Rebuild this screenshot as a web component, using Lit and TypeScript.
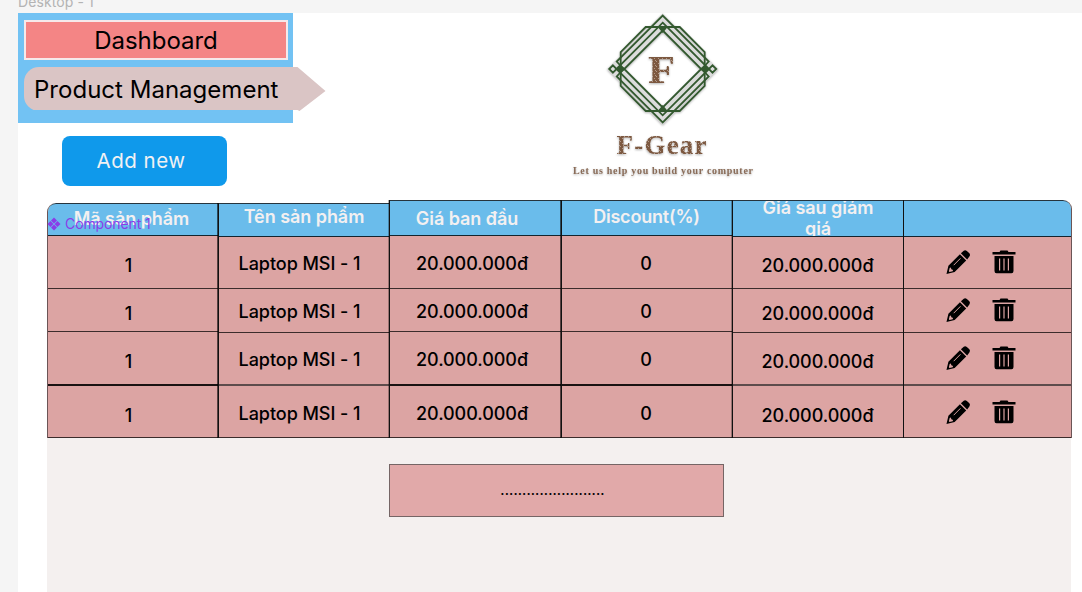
import { LitElement, html, css, svg } from "lit";
import { customElement } from "lit/decorators.js";

interface Column {
  cls: string;
  title: string;
  value: string;
}

const COLUMNS: Column[] = [
  { cls: "c1", title: "Mã sản phẩm", value: "1" },
  { cls: "c2", title: "Tên sản phẩm", value: "Laptop MSI - 1" },
  { cls: "c3", title: "Giá ban đầu", value: "20.000.000đ" },
  { cls: "c4", title: "Discount(%)", value: "0" },
  { cls: "c5", title: "Giá sau giảm giá", value: "20.000.000đ" },
  { cls: "c6", title: "", value: "" },
];
const ROWS = ["r1", "r2", "r3", "r4"];

@customElement("fg-logo")
export class FgLogo extends LitElement {
  static styles = css`
    :host { display: block; width: 210px; height: 177px; }
    svg { display: block; overflow: visible; }
    .shade { filter: drop-shadow(0 1.5px 1.2px rgba(0, 0, 0, 0.3)); }
    .line { fill: none; stroke: #33592f; stroke-width: 1.8; }
    .band { fill: none; stroke: #dcdcdc; stroke-width: 13; }
    .solid { fill: #33592f; }
    .word { font-family: "Liberation Serif", serif; font-weight: 700; fill: url(#wood); }
    .tag { fill: #8a6c58; }
  `;
  render() {
    const diamond = (r: number) =>
      svg`<path class="line" d="M0 ${-r}L${r} 0L0 ${r}L${-r} 0Z"/>`;
    return html`<svg width="210" height="177" viewBox="560 13 210 177">
      <defs>
        <pattern id="wood" width="4" height="5" patternUnits="userSpaceOnUse">
          <rect width="4" height="5" fill="#7c5840" />
          <path d="M0 1h1v1h-1zM2 3h1v1h-1zM3 0h1v1h-1z" fill="#b29a8a" />
        </pattern>
      </defs>
      <g class="shade">
        <g transform="translate(662.7 69)">
          <path class="band" d="M0 -46.500L46.500 0L0 46.500L-46.500 0Z" />
          ${diamond(38.5)}${diamond(46.3)}
          <path class="line" d="M-17 -42H17L42 -17V17L17 42H-17L-42 17V-17Z" />
          <path class="line" d="M-39 0L-46 -7.500L0 -53.500L46 -7.500L39 0L46 7.500L0 53.500L-46 7.500Z" />
          <path class="solid" d="M0 -43l5 1l-5 6l-5-6zM0 43l5-1l-5-6l-5 6zM-46 0l4-4l5 4l-5 4zM46 0l-4-4l-5 4l5 4z" />
          <path class="line" stroke-width="1.5" d="M-53.500 0l3.700-3.700l3.700 3.700l-3.700 3.700zM53.500 0l-3.700-3.700l-3.700 3.700l3.700 3.700z" />
        </g>
        <text class="word" x="648" y="83" font-size="41" textLength="27" lengthAdjust="spacingAndGlyphs">F</text>
        <text class="word" x="616.500" y="153.500" font-size="27" textLength="90">F-Gear</text>
        <text class="word tag" x="573" y="174" font-size="10" textLength="180">Let us help you build your computer</text>
      </g>
    </svg>`;
  }
}

@customElement("app-root")
export class AppRoot extends LitElement {
  static styles = css`
    :host {
      display: block; position: relative; box-sizing: border-box;
      width: 1082px; height: 592px; overflow: hidden;
      padding: 13px 0 0 18px; background: #f5f5f5;
      font-family: Inter, sans-serif; color: #000;
    }
    * { box-sizing: border-box; }
    .frame-name {
      position: absolute; left: 18px; top: -7px; font-size: 14px; line-height: 18px;
      color: #b3b3b3; letter-spacing: 0.1px; white-space: nowrap;
    }
    .frame { height: 579px; background: #fff; display: flex; flex-direction: column; }
    .top { display: flex; height: 187px; flex: none; }
    .left { width: 542px; }
    .nav { width: 275px; height: 109.500px; background: #72c2f3; padding: 7px 5px 0 6px; }
    .dash {
      width: 264px; height: 40px; border: 2px solid #f6e9ea; background: #f48585;
      font-size: 24px; line-height: 37px; text-align: center; letter-spacing: -0.02px;
    }
    .prod {
      width: 302.500px; height: 44px; margin: 7px 0 0 -0.500px; padding-left: 10.500px;
      background: #dac5c5; border-radius: 15px 0 0 15px;
      clip-path: polygon(0 0, 274px 0, 302px 24px, 276px 44px, 274px 43px, 0 43px);
      font-size: 24px; line-height: 45px; white-space: nowrap; letter-spacing: 0.02px;
    }
    .add {
      display: block; border: 0; width: 165px; height: 50px; margin: 13.500px 0 0 43.500px; padding: 0 6px 0 0;
      border-radius: 8px; background: #0f99eb; color: #f1f1f3;
      font: 400 20.5px/50px Inter, sans-serif; letter-spacing: 0.5px;
    }
    .table { display: flex; height: 238px; width: 1025px; margin-left: 29px; flex: none; align-items: flex-end; }
    .col { display: flex; flex-direction: column; border-left: 1px solid #111; text-align: center; font-size: 18px; line-height: 22px; font-weight: 500; letter-spacing: -0.05px; }
    .cell { border-bottom: 1px solid #3c2c2c; background: #dca4a3; white-space: nowrap; }
    .head {
      border-top: 1px solid #26343d; border-bottom: 1px solid #14242e; background: #6abceb;
      color: #f3f0f1; font-weight: 600; overflow: hidden;
    }
    .c1 { width: 171px; border-left-color: #6b5556; border-top-left-radius: 9px; overflow: hidden; }
    .c2 { width: 171px; box-shadow: -1px 0 rgba(0, 0, 0, 0.6); }
    .c3 { width: 172px; box-shadow: -1px 0 rgba(0, 0, 0, 0.3); }
    .c4 { width: 171px; box-shadow: -1px 0 rgba(0, 0, 0, 0.6); }
    .c5 { width: 171px; box-shadow: -1px 0 rgba(0, 0, 0, 0.3); }
    .c6 { width: 169px; border-right: 1px solid #6b5556; border-top-right-radius: 9px; overflow: hidden; }
    .c1 .head { height: 33px; padding: 4px 3px 0 0; border-top-left-radius: 8px; }
    .c2 .head { height: 34px; padding-top: 2px; }
    .c3 .head { height: 36px; padding: 7px 17px 0 0; }
    .c4 .head { height: 36px; padding: 5px 1px 0 0; letter-spacing: -0.2px; }
    .c5 .head { height: 37px; padding: 0 20px; line-height: 21px; white-space: normal; }
    .c5 .head span { display: block; margin-top: -4px; }
    .c6 .head { height: 37px; border-top-right-radius: 8px; }
    .r1 { height: 52px; padding-top: 16px; }
    .r2 { height: 44px; padding-top: 12px; }
    .r3 { height: 53px; padding-top: 16px; border-bottom: 2px solid #5d4c4c; }
    .r4 { height: 52px; padding-top: 17px; }
    .c1 .r1, .c3 .r1, .c4 .r1 { height: 53px; padding-top: 17px; }
    .c1 .r2, .c3 .r2, .c4 .r2 { height: 43px; }
    .c1 .r3, .c3 .r3, .c4 .r3 { height: 54px; padding-top: 17px; border-bottom-color: #1a1212; }
    .c1 .cell:not(.head) span, .c5 .cell:not(.head) span { display: block; margin-top: 2px; }
    .c1 .cell:not(.head) { padding-right: 9px; }
    .c2 .cell:not(.head) { padding-right: 9px; }
    .c3 .cell:not(.head) { padding-right: 7px; }
    .c4 .cell:not(.head) { padding-right: 2px; }
    .c5 .cell:not(.head) { padding-right: 1px; }
    .icons { display: flex; justify-content: center; gap: 21px; padding-right: 14px; }
    .icons svg { display: block; margin-top: -4px; }
    .rest { flex: 1; width: 1024px; margin-left: 29px; background: #f4f0ef; padding: 26px 0 0 341.500px; }
    .more {
      width: 335px; height: 53px; border: 1px solid #756565; background: #e1a9a9;
      text-align: center; font-size: 14px; line-height: 50px; padding-right: 7px; letter-spacing: 0.1px; font-weight: 500;
    }
    .component {
      position: absolute; left: 47px; top: 215px; display: flex; align-items: center; gap: 4px;
      color: #8a3de8; font-size: 14px; line-height: 18px; letter-spacing: -0.1px;
    }
  `;

  private icons() {
    return html`
      <svg width="25" height="26" viewBox="0 0 26 26">
        <path d="M0.500 25.500L2.500 17L14.500 5L21 11.500L9 23.300Z M15.500 4L18.500 1.200Q20 0 21.700 1.500L24.300 4Q25.600 5.700 24.300 7.300L22 10.500Z" />
        <path d="M8 16.300L15 9.200" stroke="#dca4a3" stroke-width="1" />
        <path d="M3.800 19.200L5 18.800L5.600 20.600L7.300 21.300L7 22.600L3.600 23.500L3 22.700Z" fill="#dca4a3" />
      </svg>
      <svg width="24" height="26" viewBox="0 0 24 26">
        <path d="M0.500 3H7.500L8.500 1.500H15.500L16.500 3H23.500V5.500H0.500Z M2.500 7H21.500V22Q21.500 24.200 19.500 24.200H4.500Q2.500 24.200 2.500 22Z" />
        <path d="M7.600 9.500V21.500M12 9.500V21.500M16.400 9.500V21.500" stroke="#dca4a3" stroke-width="1.200" />
      </svg>`;
  }

  render() {
    return html`
      <div class="frame-name">Desktop - 1</div>
      <main class="frame">
        <section class="top">
          <div class="left">
            <nav class="nav">
              <div class="dash">Dashboard</div>
              <div class="prod">Product Management</div>
            </nav>
            <button class="add">Add new</button>
          </div>
          <fg-logo></fg-logo>
        </section>
        <section class="table">
          ${COLUMNS.map(
            (c) => html`<div class="col ${c.cls}">
              <div class="cell head"><span>${c.title}</span></div>
              ${ROWS.map((r) =>
                c.cls === "c6"
                  ? html`<div class="cell icons ${r}">${this.icons()}</div>`
                  : html`<div class="cell ${r}"><span>${c.value}</span></div>`
              )}
            </div>`
          )}
        </section>
        <section class="rest"><div class="more">........................</div></section>
      </main>
      <div class="component">
        <svg width="14" height="14" viewBox="0 0 14 14" fill="#8a3de8">
          <path d="M7 0.500l3 3l-3 3l-3-3zM7 7.500l3 3l-3 3l-3-3zM3.500 4l3 3l-3 3l-3-3zM10.500 4l3 3l-3 3l-3-3z" />
        </svg>
        <span>Component 1</span>
      </div>
    `;
  }
}
